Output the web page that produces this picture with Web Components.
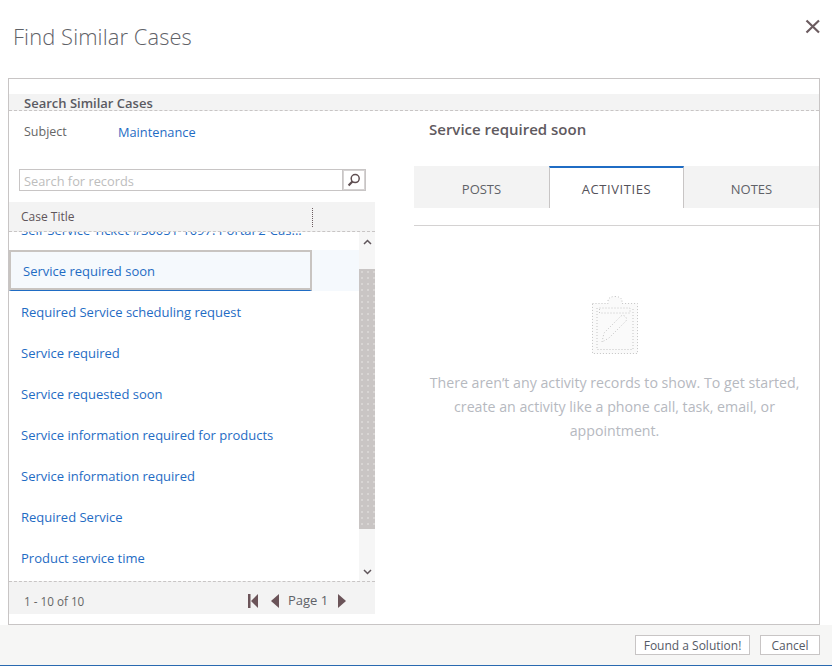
<!DOCTYPE html>
<html>
<head>
<meta charset="utf-8">
<title>Find Similar Cases</title>
<style>
  html, body { margin: 0; padding: 0; background: #fff; }
  body { font-family: "Open Sans", "Liberation Sans", sans-serif; color: #666; }
</style>
</head>
<body>
<case-dialog>
  <span slot="title">Find Similar Cases</span>
  <search-panel slot="left"></search-panel>
  <detail-panel slot="right"></detail-panel>
</case-dialog>

<script>
const BLUE = '#1f6cc4'

function shadow(el, html) {
  el.attachShadow({ mode: 'open' })
  el.shadowRoot.innerHTML = html
}

class CaseDialog extends HTMLElement {
  connectedCallback() {
    shadow(this, `
    <style>
      :host { display: flex; flex-direction: column; width: 832px; height: 667px; box-sizing: border-box; overflow: hidden; }
      .head { height: 78px; display: flex; justify-content: space-between; box-sizing: border-box; padding: 21px 12px 0 13px; flex: none; }
      .title { font-size: 21.9px; font-weight: 300; line-height: 32px; color: #5f6268; letter-spacing: .1px; }
      .frame { flex: none; height: 547px; margin: 0 12px 0 8px; box-sizing: border-box; border: 1px solid #c8c5c5; padding-top: 15px; display: flex; flex-direction: column; }
      .strip { height: 16px; flex: none; background: #f3f3f3; border-bottom: 1px dashed #c8c5c5; padding-left: 15px; font-size: 13px; font-weight: 600; line-height: 18px; color: #5a5a62; }
      .cols { flex: 1; display: flex; min-height: 0; }
      .foot { flex: 1; background: #f6f6f5; border-bottom: 1px solid #2a6ab0; margin-bottom: 1px; display: flex; justify-content: flex-end; align-items: flex-start; gap: 10px; padding: 10px 12px 0 0; }
      button { height: 20px; box-sizing: border-box; background: #fff; border: 1px solid #c8c5c5; font: 12px "Open Sans", sans-serif; color: #555a66; padding: 0; }
      .ok { width: 115px; } .no { width: 60px; }
      svg { margin-top: -2px; display: block; }
    </style>
    <div class="head">
      <div class="title"><slot name="title"></slot></div>
      <svg width="15" height="15" viewBox="0 0 15 15"><path d="M1.500 1.500 14 13.500M14 1.500 1.500 13.500" stroke="#6b5b5f" stroke-width="2.200" fill="none"/></svg>
    </div>
    <div class="frame">
      <div class="strip">Search Similar Cases</div>
      <div class="cols"><slot name="left"></slot><slot name="right"></slot></div>
    </div>
    <div class="foot"><button class="ok">Found a Solution!</button><button class="no">Cancel</button></div>`)
  }
}

class SearchPanel extends HTMLElement {
  connectedCallback() {
    shadow(this, `
    <style>
      :host { display: flex; flex-direction: column; width: 366px; flex: none; }
      .subject { height: 58px; box-sizing: border-box; padding: 11px 0 0 15px; display: flex; font-size: 12.500px; line-height: 20px; }
      .subject span { width: 94px; color: #666; }
      .subject a { color: ${BLUE}; font-size: 12.800px; }
    </style>
    <div class="subject"><span>Subject</span><a>Maintenance</a></div>
    <search-box></search-box>
    <case-grid></case-grid>`)
  }
}

class SearchBox extends HTMLElement {
  connectedCallback() {
    shadow(this, `
    <style>
      :host { display: flex; width: 347px; height: 22px; margin: 0 0 11px 10px; box-sizing: border-box; border: 1px solid #c8c5c5; flex: none; }
      .txt { flex: 1; padding-left: 4px; font-size: 12.800px; line-height: 23px; height: 20px; color: #bdbdbd; }
      .btn { width: 22px; border-left: 1px solid #c8c5c5; box-shadow: inset 0 0 0 1px #d6d3d3; display: flex; align-items: center; justify-content: center; }
    </style>
    <div class="txt">Search for records</div>
    <div class="btn"><svg width="14" height="14" viewBox="0 0 14 14"><circle cx="8.200" cy="5.600" r="4" fill="none" stroke="#5f4f52" stroke-width="1.500"/><path d="M5.400 8.500 1.600 12.400" stroke="#5f4f52" stroke-width="2.200"/></svg></div>`)
  }
}

class CaseGrid extends HTMLElement {
  connectedCallback() {
    const rows = [
      'Self-Service Ticket #30051-1097: Portal 2-Cas...',
      'Service required soon',
      'Required Service scheduling request',
      'Service required',
      'Service requested soon',
      'Service information required for products',
      'Service information required',
      'Required Service',
      'Product service time'
    ]
    shadow(this, `
    <style>
      :host { display: flex; flex-direction: column; flex: none; height: 412px; }
      .hd { height: 29px; flex: none; background: #f3f3f3; border-bottom: 1px dashed #c8c5c5; display: flex; align-items: center; padding-left: 12px; font-size: 12px; color: #5f555a; }
      .hd span { width: 291px; }
      .hd i { width: 1px; height: 19px; border-left: 1px dotted #6b5b5f; margin-top: 1px; }
      .mid { flex: none; height: 349px; display: flex; min-height: 0; }
      .list { flex: 1; overflow: hidden; }
      .inner { margin-top: -23px; }
      .sb { width: 16px; flex: none; background: #f6f6f6; display: flex; flex-direction: column; align-items: center; }
      .sb svg { flex: none; }
      .gap-a { height: 37px; flex: none; display: flex; align-items: center; justify-content: center; box-sizing: border-box; padding-bottom: 17px; }
      .thumb { width: 100%; height: 260px; flex: none; background-color: #c9c5c4; background-image: radial-gradient(#e9e7e6 0.6px, transparent 0.8px); background-size: 6px 6px; }
      .gap-b { flex: 1; display: flex; align-items: flex-end; justify-content: center; padding-bottom: 6px; }
    </style>
    <div class="hd"><span>Case Title</span><i></i></div>
    <div class="mid">
      <div class="list"><div class="inner">
        ${rows.map((r, i) => `<case-row${i == 1 ? ' selected' : ''}>${r}</case-row>`).join('')}
      </div></div>
      <div class="sb">
        <div class="gap-a"><svg width="9" height="6" viewBox="0 0 9 6"><path d="M1 5 4.500 1.500 8 5" fill="none" stroke="#5f555a" stroke-width="1.500"/></svg></div>
        <div class="thumb"></div>
        <div class="gap-b"><svg width="9" height="6" viewBox="0 0 9 6"><path d="M1 1 4.500 4.500 8 1" fill="none" stroke="#5f555a" stroke-width="1.500"/></svg></div>
      </div>
    </div>
    <grid-pager></grid-pager>`)
  }
}

class CaseRow extends HTMLElement {
  connectedCallback() {
    shadow(this, `
    <style>
      :host { display: block; height: 41px; box-sizing: border-box; padding-left: 12px; font-size: 13px; line-height: 43px; color: ${BLUE}; white-space: nowrap; overflow: hidden; }
      :host([selected]) { background: #f5f9fd; padding-left: 0; }
      .focus { width: 303px; height: 41px; box-sizing: border-box; border: 2px solid #c8c4c1; border-bottom: 1px solid ${BLUE}; box-shadow: inset 0 -2px 0 #c8c4c1; padding-left: 12px; line-height: 38px; }
    </style>
    ${this.hasAttribute('selected') ? '<div class="focus"><slot></slot></div>' : '<slot></slot>'}`)
  }
}

class GridPager extends HTMLElement {
  connectedCallback() {
    shadow(this, `
    <style>
      :host { display: flex; height: 33px; flex: none; background: #f3f3f3; border-top: 1px dashed #c8c5c5; align-items: center; padding: 6px 0 0 15px; font-size: 11.700px; color: #666; box-sizing: border-box; }
      .count { width: 224px; }
      .nav { display: flex; align-items: center; }
      .page { font-size: 13px; color: #5f6268; margin: -2px 10px 0 9px; }
    </style>
    <div class="count">1 - 10 of 10</div>
    <div class="nav">
      <svg width="10" height="14" viewBox="0 0 10 14"><path d="M0 0H2.500V14H0ZM10 0V14L3 7Z" fill="#6b5459"/></svg>
      <svg style="margin-left:13px" width="8" height="14" viewBox="0 0 8 14"><path d="M8 0V14L0 7Z" fill="#6b5459"/></svg>
      <span class="page">Page 1</span>
      <svg width="8" height="14" viewBox="0 0 8 14"><path d="M0 0V14L8 7Z" fill="#6b5459"/></svg>
    </div>`)
  }
}

class DetailPanel extends HTMLElement {
  connectedCallback() {
    shadow(this, `
    <style>
      :host { display: flex; flex-direction: column; flex: 1; margin-left: 39px; min-width: 0; }
      h2 { margin: 0; height: 55px; box-sizing: border-box; padding: 7px 0 0 15px; font-size: 15px; font-weight: 600; line-height: 22px; color: #5f5a60; }
    </style>
    <h2>Service required soon</h2>
    <tab-strip></tab-strip>
    <empty-state></empty-state>`)
  }
}

class TabStrip extends HTMLElement {
  connectedCallback() {
    shadow(this, `
    <style>
      :host { display: flex; height: 42px; flex: none; background: #f3f3f3; font-size: 13px; color: #5f6268; margin-bottom: 17px; }
      div { display: flex; align-items: center; justify-content: center; box-sizing: border-box; padding-top: 3px; }
      .a { width: 135px; } .b { width: 135px; } .c { flex: 1; }
      .b { background: #fff; border: 1px solid #c8c5c5; border-width: 2px 1px 0; border-top-color: ${BLUE}; color: #54525a; padding-top: 1px; letter-spacing: .6px; }
    </style>
    <div class="a">POSTS</div><div class="b">ACTIVITIES</div><div class="c">NOTES</div>`)
  }
}

class EmptyState extends HTMLElement {
  connectedCallback() {
    shadow(this, `
    <style>
      :host { display: flex; flex: 1; border-top: 1px solid #d4d2d2; }
      .wrap { flex: 1; display: flex; flex-direction: column; align-items: center; padding: 69px 4px 0 0; }
      svg { display: block; }
      p { margin: 16px 0 0; width: 385px; text-align: center; font-size: 14.200px; line-height: 24px; color: #b6b9bf; }
    </style>
    <div class="wrap">
    <svg width="48" height="60" viewBox="0 0 48 60" fill="#fafafa" stroke="#c4c4c4" stroke-dasharray="1 2">
      <path d="M1.500 8.500H17V6C17 3 20 1.500 24 1.500S31 3 31 6V8.500H46.500V58.500H1.500Z"/>
      <path d="M6 13V54.500H42V13"/>
      <path d="M8.500 13H39V18H8.500Z"/>
      <path d="M11 47 13 38 30 21C33 19 37 23 35 26L18 43Z"/>
    </svg>
    <p>There aren’t any activity records to show. To get started, create an activity like a phone call, task, email, or appointment.</p>
    </div>`)
  }
}

customElements.define('case-dialog', CaseDialog)
customElements.define('search-panel', SearchPanel)
customElements.define('search-box', SearchBox)
customElements.define('case-grid', CaseGrid)
customElements.define('case-row', CaseRow)
customElements.define('grid-pager', GridPager)
customElements.define('detail-panel', DetailPanel)
customElements.define('tab-strip', TabStrip)
customElements.define('empty-state', EmptyState)
</script>
</body>
</html>
